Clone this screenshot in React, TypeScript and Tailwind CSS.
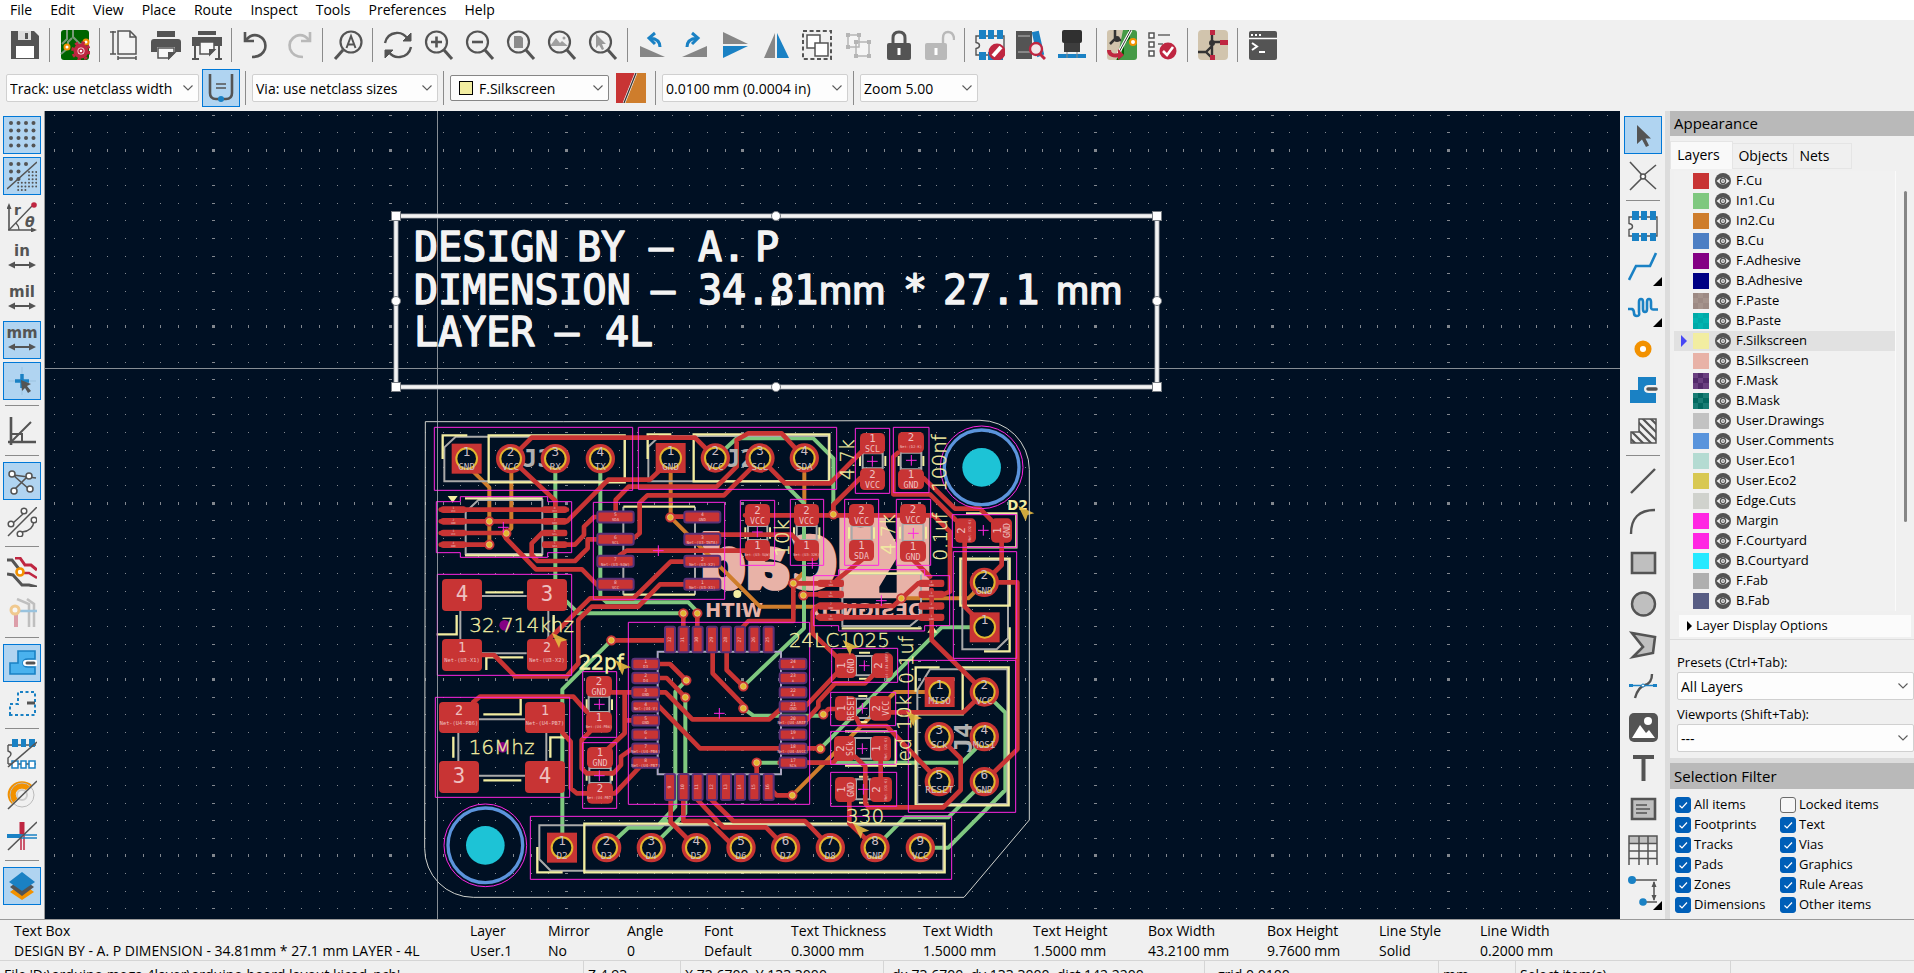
import React, { useState } from "react";

const UI = "font-['Open_Sans','Noto_Sans',sans-serif]";
const G = "#545454";
const B = "#1a81c4";
const R = "#bf2641";
const O = "#f29100";

/* ---------- shared controls ---------- */

function Svg({ children }: { children: React.ReactNode }) {
  return (
    <svg viewBox="0 0 30 30" className="size-[30px]" fill="none" stroke={G} strokeWidth="2" aria-hidden="true">
      {children}
    </svg>
  );
}

function ToolButton({ label, active, more, children }: { label: string; active?: boolean; more?: boolean; children: React.ReactNode }) {
  return (
    <button
      type="button"
      aria-label={label}
      className={
        active
          ? "relative flex size-[38px] shrink-0 items-center justify-center border border-[#0078d7] bg-[#b0d4f1]"
          : "relative flex size-[38px] shrink-0 items-center justify-center"
      }
    >
      <Svg>{children}</Svg>
      {more && (
        <svg viewBox="0 0 9 9" className="absolute right-0 bottom-0 size-[9px]" aria-hidden="true">
          <path d="M9 0V9H0Z" fill="#000" />
        </svg>
      )}
    </button>
  );
}

const VSep = () => <div className="mr-[3px] ml-[2px] h-[34px] w-px shrink-0 bg-[#8b8b8b]" />;
const HSep = () => <div className="mt-[2px] mb-[3px] h-px w-[34px] shrink-0 bg-[#8b8b8b]" />;

function Combo({ label, value, width, swatch, edge }: { label: string; value: string; width: string; swatch?: boolean; edge?: boolean }) {
  return (
    <div className={`relative flex shrink-0 items-center rounded-[2px] border bg-[#fdfdfd] ${edge ? "h-[26px] border-[#868686]" : "h-7 border-[#d0d0d0]"} ${width}`}>
      {swatch && <span className="ml-2 size-[14px] shrink-0 border border-black bg-[#f2eda1]" />}
      <select aria-label={label} className={`h-full w-full appearance-none bg-transparent pr-6 text-[14px] text-black outline-none ${swatch ? "pl-[6px]" : "pl-[3px]"}`}>
        <option>{value}</option>
      </select>
      <svg viewBox="0 0 10 6" className="pointer-events-none absolute right-[5px] h-[6px] w-[10px]" fill="none" stroke="#5b5b5b" strokeWidth="1.1" aria-hidden="true">
        <path d="M.5.5 5 5 9.5.5" />
      </svg>
    </div>
  );
}

/* ---------- icons ---------- */

const lens = <path d="M20 20 28 29" strokeWidth="3" />;
const ring = <circle cx="12.5" cy="12" r="10.5" strokeWidth="2.2" />;
const chip = (
  <>
    <path d="M1 6H29V25H1V18.500Q4.500 18 4.500 15.500T1 12.500Z" strokeWidth="1.400" />
    <path d="M4 0h7v9H4zM13 0h6v9h-6zM22 0h6v9h-6zM4 22h7v8H4zM13 22h6v8h-6zM22 22h6v8h-6z" fill={B} stroke="none" />
  </>
);

const ico = {
  save: (
    <>
      <path d="M1 1H24L29 6V29H1Z" fill={G} stroke="none" />
      <path d="M8 1H21V10H8Z" fill="#dedede" stroke="none" />
      <path d="M15 3h3v6h-3z" fill={G} stroke="none" />
      <path d="M6 16H24V28H6Z" fill="#fff" stroke="none" />
    </>
  ),
  board: (
    <>
      <rect x="1" y="0" width="28" height="30" rx="3" fill="#006400" stroke="none" />
      <path d="M7 0V9L2 14M13 0V7L20 14H29M1 24 8 18V12L12 8" stroke="#7a9a7a" strokeWidth="2" />
      <circle cx="7" cy="17" r="2.500" fill="#fff" stroke={O} />
      <circle cx="26" cy="12" r="2.500" fill="#fff" stroke={O} />
      <circle cx="21" cy="21" r="5.500" fill="#fff" stroke={R} strokeWidth="4" />
      <circle cx="21" cy="21" r="8.500" stroke={R} strokeWidth="2.500" strokeDasharray="3.400 3.300" />
      <circle cx="21" cy="21" r="2" stroke={R} strokeWidth="1.500" />
    </>
  ),
  page: (
    <>
      <path d="M8 1H20L26 7V24H8Z" fill="#f3f3f3" strokeWidth="1.500" />
      <path d="M20 1V7H26" strokeWidth="1.500" />
      <path d="M3 1V24M0 2H6M0 24H6M8 28H26M8 26V30M26 26V30" strokeWidth="1.500" />
    </>
  ),
  print: (
    <>
      <path d="M6 1H24V7H6Z" fill={G} stroke="none" />
      <path d="M3 9H27Q30 9 30 12V22H24V17H6V22H0V12Q0 9 3 9Z" fill={G} stroke="none" />
      <path d="M7 18H23V23L18 28H7Z" fill="#f7f7f7" strokeWidth="1.500" />
      <path d="M23 23H18V28Z" fill={G} />
    </>
  ),
  plot: (
    <>
      <path d="M6 1H24V5H6ZM0 7H30V16H0Z" fill={G} stroke="none" />
      <path d="M8 12H22V20L18 24H8Z" fill="#f7f7f7" strokeWidth="1.500" />
      <path d="M3 16V28M27 16V28M0 29H7M23 29H30" />
      <path d="M22 20H18V24Z" fill={G} />
    </>
  ),
  undo: <path d="M3 2V11H12M4 10Q10 3 17 6Q25 10 23 19Q20 27 10 27" strokeWidth="2.600" />,
  redo: <path d="M27 2V11H18M26 10Q20 3 13 6Q5 10 7 19Q10 27 20 27" strokeWidth="2.600" stroke="#b9b9b9" />,
  find: (
    <>
      <circle cx="18" cy="12" r="10.500" strokeWidth="2.200" />
      <path d="M10 20 2 29" strokeWidth="3" />
      <path d="M13.500 18 18 6 22.500 18M15 14.500H21" />
    </>
  ),
  refresh: (
    <>
      <path d="M2 13Q4 4 13 3Q20 2 25 9M28 17Q26 26 17 27Q10 28 5 21" strokeWidth="2.400" />
      <path d="M28 3V11H20ZM2 28V20H10Z" fill={G} strokeWidth="1" />
    </>
  ),
  zin: <>{ring}{lens}<path d="M7 12H18M12.500 6.500V17.500" strokeWidth="2.600" /></>,
  zout: <>{ring}{lens}<path d="M7 12H18" strokeWidth="2.600" /></>,
  zpage: <><path d="M8 6H15L17 8V18H8Z" fill="#8b8b8b" stroke="none" />{ring}{lens}</>,
  zobj: <><path d="M3 16 9 8 13 13 15 11 21 16Z" fill="#a0a0a0" stroke="none" /><circle cx="17" cy="8" r="1.500" fill="#a0a0a0" stroke="none" />{ring}{lens}</>,
  zsel: <><path d="M8 4V18L11 15 14 20 16 19 14 14H18Z" fill="#9a9a9a" stroke="none" />{ring}{lens}</>,
  ccw: <><path d="M2 16V27H27Z" fill="#868686" stroke="none" /><path d="M22 17Q22 9 12 8M17 3 11 8 17 14" stroke={B} strokeWidth="3" /></>,
  cw: <><path d="M28 16V27H3Z" fill="#868686" stroke="none" /><path d="M8 17Q8 9 18 8M13 3 19 8 13 14" stroke={B} strokeWidth="3" /></>,
  flipv: <><path d="M3 2V14H28Z" fill="#868686" stroke="none" /><path d="M3 16V28L28 16Z" fill={B} stroke="none" /></>,
  fliph: <><path d="M14 3V28H3Z" fill="#868686" stroke="none" /><path d="M16 3V28H28Z" fill={B} stroke="none" /></>,
  group: <><path d="M1 1H29V29H1Z" strokeDasharray="4 2.600" /><path d="M5 5H18V18H5Z" fill="#fff" strokeWidth="1.500" /><path d="M13 13H26V26H13Z" fill="#fff" strokeWidth="1.500" /></>,
  ungroup: <g stroke="#b5b5b5"><path d="M5 5H16V17H5ZM13 12H26V26H13Z" fill="#f5f5f5" strokeWidth="1.500" /><path d="M4 4h2v2H4zM15 4h2v2h-2zM4 16h2v2H4zM12 11h2v2h-2zM25 11h2v2h-2zM12 25h2v2h-2zM25 25h2v2h-2z" /></g>,
  lock: <><rect x="3" y="13" width="24" height="17" rx="2" fill={G} stroke="none" /><path d="M9 14V8Q9 2 15 2T21 8V14" strokeWidth="3" /><path d="M15 18V25" stroke="#fff" strokeWidth="3" /></>,
  unlock: <g stroke="#b9b9b9"><rect x="0" y="13" width="22" height="17" rx="2" fill="#b9b9b9" stroke="none" /><path d="M18 14V8Q18 2 23 2T29 8V10" strokeWidth="2.400" /><path d="M11 18V25" stroke="#fff" strokeWidth="3" /></g>,
  fpedit: <>{chip}<circle cx="22" cy="22" r="8.500" fill={R} stroke="none" /><path d="M18 26 26 17" stroke="#fff" strokeWidth="4" /></>,
  lib: <><path d="M1 2H7V28H1ZM9 2H15V28H9Z" fill={G} /><path d="M2 6H14M2 22H14" stroke="#bbb" strokeWidth="1" /><path d="M17 3 22 2 27 24 22 26Z" fill={B} stroke={B} /><circle cx="20" cy="19" r="6" fill="#f0e8ea" stroke={R} strokeWidth="2.400" /><path d="M24 24 29 29" stroke={R} strokeWidth="3" /></>,
  d3: <><rect x="5" y="0" width="20" height="13" rx="2" fill="#303030" stroke="none" /><path d="M7 13H23V22H7Z" fill="#3d3d3d" stroke="none" /><path d="M1 24H29V28H1Z" fill={B} stroke="none" /><path d="M10 22V28M20 22V28" stroke="#888" strokeWidth="1" /></>,
  upd: <><rect x="0" width="18" height="30" rx="3" fill="#d1c4ad" stroke="none" /><path d="M16 0H27Q30 0 30 3V27Q30 30 27 30H10Z" fill="#459a46" stroke="none" /><path d="M22 0V8L16 14V24L10 30" stroke="#006400" /><path d="M8 0V9L3 14M8 10H14" stroke="#333" strokeWidth="2.500" /><circle cx="10" cy="9" r="3" fill="#333" stroke="none" /><circle cx="26" cy="12" r="3" fill="#fff" stroke={O} /><path d="M24 0 11 24" stroke="#fff" strokeWidth="3" /><path d="M24 0 11 24" stroke="#333" strokeWidth="1" /><path d="M2 20Q2 27 13 25" stroke={R} strokeWidth="4" /><path d="M11 19 17 25 11 30Z" fill={R} stroke="none" /></>,
  drc: <><path d="M1 3H6V8H1ZM1 12H6V17H1ZM1 21H6V26H1Z" fill="#fff" strokeWidth="1.500" /><path d="M10 5H22M10 14H15" stroke="#888" /><circle cx="20" cy="21" r="8.500" fill={R} stroke="none" /><path d="M15 21 19 25 25 17" stroke="#fff" strokeWidth="2.600" /></>,
  sch: <><rect width="30" height="30" rx="4" fill="#d1c4ad" stroke="none" /><path d="M14 0V30M14 12H26M0 22H8L14 16M8 22 14 28" stroke="#333" strokeWidth="2.400" /><circle cx="14" cy="13" r="3" fill="#333" stroke="none" /><path d="M12 0h5v5h-5zM22 10h8v5h-8zM12 25h5v5h-5z" fill={R} stroke="none" /></>,
  term: <><rect x="1" y="1" width="28" height="29" rx="2" fill={G} stroke="none" /><path d="M1 8.500H29" stroke="#fff" strokeWidth="1.500" /><path d="M3 5H5M7 5H9M11 5H13" stroke="#fff" /><path d="M4 13 9 16.500 4 20M11 22H17" stroke="#fff" /></>,
};

const dots = (x0: number, y0: number, n: number, m: number, s: number, r: number) =>
  Array.from({ length: n * m }, (_, i) => <circle key={i} cx={x0 + (i % n) * s} cy={y0 + Math.floor(i / n) * s} r={r} fill={G} stroke="none" />);

function Dim({ text }: { text: string }) {
  return (
    <>
      <text x="15" y="13" textAnchor="middle" fill={G} stroke="none" fontFamily="DejaVu Sans" fontSize="15" fontWeight="600">{text}</text>
      <path d="M5 22H25" />
      <path d="M1 22 8 18.500V25.500ZM29 22 22 18.500V25.500Z" fill={G} stroke="none" />
    </>
  );
}

const left = {
  grid: <>{dots(4, 3, 4, 4, 7.5, 2)}</>,
  gridov: <>{dots(4, 3, 2, 3, 7.5, 2)}{dots(19, 3, 1, 1, 7, 2)}{dots(22, 11, 3, 5, 3.6, 1)}{dots(11.2, 21.8, 3, 3, 3.6, 1)}<path d="M0 28 30 1" strokeWidth="1.500" /></>,
  polar: <><path d="M2 28V4M1 28H28" strokeWidth="1.600" /><path d="M2 1 4.500 7H-.5ZM30 28 24 25.500V30.500Z" fill={G} stroke="none" /><path d="M2 28 25 4M9 21Q12 24 12 28" strokeWidth="1.300" /><circle cx="27" cy="3" r="2.800" fill={R} stroke="none" /><text x="7" y="13" fontSize="14" fill={G} stroke="none" fontFamily="DejaVu Sans" fontWeight="600">r</text><text x="18" y="25" fontSize="14" fill={G} stroke="none" fontFamily="DejaVu Sans" fontStyle="italic" fontWeight="600">θ</text></>,
  cursor: <><path d="M15 1V29M1 15H29" stroke="#9cc3e0" strokeWidth="1" /><path d="M15 8V22M8 15H22" stroke={B} strokeWidth="3.500" /><path d="M14 14 24 18 20 20 24 25 21 27 18 22 15 25Z" fill={G} stroke="none" /></>,
  angle: <><path d="M4 1V29M1 26H29" strokeWidth="2.600" /><path d="M4 26 24 6M4 18H15V26" strokeWidth="2" /></>,
  rats: <><path d="M6 9 29 12M6 25 21 10M6 9 23 24" strokeWidth="1.600" /><circle cx="5" cy="8" r="3" fill="#fff" strokeWidth="1.500" /><circle cx="22" cy="10" r="3" fill="#fff" strokeWidth="1.500" /><circle cx="7" cy="25" r="3" fill="#fff" strokeWidth="1.500" /><circle cx="23" cy="23" r="3" fill="#fff" strokeWidth="1.500" /></>,
  ratcurve: <><path d="M1 29 30 0M6 16 16 7M15 25Q26 24 27 14" strokeWidth="1.500" /><circle cx="4" cy="17" r="2.800" fill="#fff" strokeWidth="1.500" /><circle cx="17" cy="4" r="2.800" fill="#fff" strokeWidth="1.500" /><circle cx="13" cy="27" r="2.800" fill="#fff" strokeWidth="1.500" /><circle cx="27" cy="13" r="2.800" fill="#fff" strokeWidth="1.500" /></>,
  contrast: <><path d="M8 1H13L18 8H24L30 13" stroke={R} strokeWidth="3" /><path d="M17 16H22L30 21" stroke={R} strokeWidth="2.600" /><path d="M0 3H5L12 12M0 17 6 18 15 28H22L30 30" strokeWidth="3" /><circle cx="13" cy="15" r="3.500" fill="#fff" stroke={O} strokeWidth="2.600" /></>,
  netcol: <g opacity=".4"><path d="M10 1 22 6V29M20 1 27 6V29" stroke="#777" strokeWidth="2.500" /><path d="M9 13H30" stroke={B} strokeWidth="2.500" /><path d="M9 15V29" stroke={R} strokeWidth="4" /><circle cx="8" cy="12" r="4" fill="#fff" stroke={O} strokeWidth="3" /></g>,
  zonefill: <><path d="M3 26V15H11V3H28V11H21Q16 11 16 15T21 19H28V26Z" fill="#4ab2ee" stroke={B} strokeWidth="1.600" /><path d="M19 15H28" stroke="#fff" strokeWidth="6" strokeLinecap="round" /><path d="M20 15H27" strokeWidth="3" strokeLinecap="round" /></>,
  zoneout: <><path d="M3 26V15H11V3H28V26Z" stroke={B} strokeDasharray="3 2.500" /><path d="M20 14H28" strokeWidth="3" /></>,
  padsk: <><path d="M1 6H29M1 25H29M1 6V12Q4 13 4 15T1 19V25" strokeWidth="1.400" /><path d="M5 0h6v8H5zM14 0h5v8h-5zM22 0h6v8h-6z" fill={B} stroke="none" /><path d="M5 22h6v7H5zM14 22h5v7h-5zM22 22h6v7h-6z" fill="#fff" stroke={B} strokeWidth="1.500" /><path d="M1 28 30 3" strokeWidth="1.600" /></>,
  viask: <><path d="M25 5A13 12 0 1 0 5 24L11 18A6 5 0 1 1 19 10Z" fill={O} stroke="none" /><circle cx="15" cy="15" r="12" stroke="#bbb" strokeWidth="1" /><circle cx="15" cy="15" r="5" fill="#f0f0f0" stroke="#ccc" /><path d="M1 29 30 1" strokeWidth="1.600" /></>,
  tracksk: <><path d="M15 1V14" stroke={R} strokeWidth="5" /><path d="M14 14V29M17 14V29" stroke={R} strokeWidth="1.500" /><path d="M0 15H14" stroke={B} strokeWidth="4" /><path d="M14 14H30M14 17H30" stroke={B} strokeWidth="1.300" /><path d="M1 29 30 1" strokeWidth="1.600" /></>,
  layers: <><path d="M15 12 27 21 15 29 3 21Z" fill={O} stroke="none" /><path d="M15 7 27 16 15 25 3 16Z" fill={G} stroke="none" /><path d="M15 1 28 11 15 20 2 11Z" fill={B} stroke="none" /></>,
};

const right = {
  arrow: <path d="M9 5V24L14 19.500 18 27 21 25.500 17.500 18.500H23Z" fill={G} stroke="none" />,
  local: <><path d="M2 1 14 14M28 4 16 14M2 29 14 17M28 28 16 17" strokeWidth="1.600" /><circle cx="15" cy="15.500" r="2.500" fill="#fff" strokeWidth="1.500" /></>,
  chip,
  route: <path d="M1 28 8 14H22L28 1" stroke={B} strokeWidth="2.600" />,
  tune: <path d="M0 16H4Q6 17 6 20T9 23T11 19V9Q11 6 13 6T15 9V16Q15 19 17 19T19 16V9Q19 6 21 6T23 9V14Q23 17 26 16.500H30" stroke={B} strokeWidth="2.600" />,
  via: <circle cx="15" cy="15" r="5.800" stroke={O} strokeWidth="5.500" fill="#fff" />,
  zone: <><path d="M2 28V15H10V2H28V10H21Q16 10 16 14T21 18H28V28Z" fill={B} stroke="none" /><path d="M20 14H28" strokeWidth="3.500" strokeLinecap="round" /></>,
  rule: <><clipPath id="ruleClip"><path d="M3 27V16H11V3H28V27Z" /></clipPath><g clipPath="url(#ruleClip)"><path d="M-4 8 20 32M1 5 26 30M6 2 32 28M10-2 36 24M14-6 40 20M-8 12 16 36" strokeWidth="2.200" /></g><path d="M3 27V16H11V3H28V27Z" strokeWidth="1.500" /></>,
  line: <path d="M3 27 27 3" strokeWidth="2.400" />,
  arc: <path d="M3 27Q3 15 9 9T27 3" strokeWidth="2.400" />,
  rect: <path d="M4 5H27V25H4Z" fill="#bfbfbf" strokeWidth="2.600" />,
  circle: <circle cx="15.500" cy="15" r="11.500" fill="#bfbfbf" strokeWidth="2.400" />,
  poly: <path d="M4 3 27 7 25 23 5 27 15 17Z" fill="#bfbfbf" strokeWidth="2.600" />,
  bezier: <><path d="M24 3Q24 12 17 14T7 27" strokeWidth="2.400" /><path d="M3 14.500H27" stroke={B} strokeWidth="1.500" /><path d="M1 13h4v3H1zM25 13h4v3h-4z" fill={B} stroke="none" /><circle cx="15" cy="14.500" r="1.500" fill="#fff" stroke={B} strokeWidth="1" /></>,
  image: <><rect x="1" y="1" width="29" height="29" rx="5" fill={G} stroke="none" /><circle cx="20" cy="9" r="4" fill="#fff" stroke="none" /><path d="M4 26 12 13 18 21 21 18 27 26Z" fill="#fff" stroke="none" /></>,
  text: <path d="M5 4H26M15.500 4V28" strokeWidth="4" />,
  textbox: <><path d="M4 5H27V25H4Z" fill="#bfbfbf" strokeWidth="2.600" /><path d="M8 11H19M8 15H22M8 19H19" strokeWidth="1.500" /></>,
  table: <><path d="M1 1H29V8H1Z" fill="#bfbfbf" stroke="none" /><path d="M1 30V1H29V30M1 8.500H29M1 16H29M1 23.500H29M11 1V30M20 1V30" strokeWidth="1.500" /></>,
  dim: <><path d="M6 4H29M16 26H29M26 6V24" strokeWidth="1.500" /><circle cx="4" cy="4" r="4" fill={B} stroke="none" /><circle cx="15" cy="26" r="3.800" fill={B} stroke="none" /><path d="M26 5 28.500 11H23.500ZM26 25 28.500 19H23.500Z" fill={G} stroke="none" /></>,
};

/* ---------- board drawing ---------- */

function gridPath() {
  let d = "";
  for (let i = -3; i < 92; i++) {
    const x = Math.round(389.8 - 353 + i * 17.64);
    const mx = ((i % 10) + 10) % 10 === 0;
    for (let j = 0; j < 48; j++) {
      const y = Math.round(149.9 - 35.3 + j * 17.64);
      const my = j % 10 === 2;
      if (mx && my) d += `M${x - 1} ${y - 1}h3v3h-3z`;
      else if (mx) d += `M${x - 1} ${y}h3v1h-3z`;
      else if (my) d += `M${x} ${y - 1}h1v3h-1z`;
      else d += `M${x} ${y}h1v1h-1z`;
    }
  }
  return d;
}

const CU = "#c83434";
const SILK = "#f2eda1";

type PinSpec = [number, number, string, string, boolean?];
const pins: PinSpec[] = [
  [140, 146, "1", "GND", true], [272, 146, "2", "VCC"], [406, 146, "3", "RX"], [541, 146, "4", "TX"],
  [752, 144, "1", "GND", true], [886, 144, "2", "VCC"], [1020, 144, "3", "SCL"], [1153, 144, "4", "SDA"],
  [1693, 517, "2", "GND"], [1694, 652, "1", "", true],
  [1559, 846, "1", "MISO", true], [1693, 846, "2", "VCC"], [1558, 980, "3", "SCk"], [1693, 980, "4", "MOSI"], [1558, 1115, "5", "RESET"], [1693, 1115, "6", "GND"],
  [426, 1313, "1", "D2", true], [560, 1313, "2", "D3"], [694, 1313, "3", "D4"], [829, 1313, "4", "D5"], [963, 1313, "5", "D6"],
  [1097, 1313, "6", "D7"], [1231, 1313, "7", "D8"], [1365, 1313, "8", "GND"], [1501, 1313, "9", "VCC"],
];

type PadSpec = [number, number, number, number, string, string];
const pads: PadSpec[] = [
  [1320, 69, 75, 62, "1", "SCL"], [1320, 175, 75, 65, "2", "VCC"],
  [1434, 66, 78, 62, "2", "Net-(D2-K)"], [1434, 178, 78, 60, "1", "GND"],
  [975, 282, 75, 66, "2", "VCC"], [975, 390, 75, 63, "1", "Net-(U3-SQW)"],
  [1122, 282, 75, 66, "2", "VCC"], [1122, 390, 75, 63, "1", "Net-(U3-32K)"],
  [1287, 282, 75, 66, "2", "VCC"], [1287, 390, 75, 63, "1", "SDA"],
  [1440, 282, 78, 60, "2", "VCC"], [1440, 393, 78, 62, "1", "GND"],
  [498, 798, 78, 62, "2", "GND"], [498, 906, 78, 62, "1", "Net-(U4-PB6)"],
  [501, 1011, 78, 63, "1", "GND"], [501, 1119, 78, 62, "2", "Net-(U4-PB7)"],
];
const hpads: PadSpec[] = [
  [1605, 325, 63, 73, "2", "Net-(D2-K)"], [1713, 325, 63, 73, "1", "GND"],
  [1245, 730, 63, 74, "1", "GND"], [1356, 730, 63, 74, "2", "Net-(U4-AREF)"],
  [1245, 858, 63, 74, "1", "RESET"], [1350, 858, 63, 74, "2", "VCC"],
  [1242, 978, 63, 75, "2", "SCk"], [1353, 978, 60, 75, "1", "Net-(D1-K)"],
  [1245, 1101, 63, 75, "1", "GND"], [1350, 1101, 66, 75, "2", "Net-(D1-K)"],
];
const xtal: PadSpec[] = [
  [66, 507, 120, 96, "4", ""], [321, 507, 120, 96, "3", ""], [66, 687, 120, 96, "1", "Net-(U3-X1)"], [321, 687, 120, 96, "2", "Net-(U3-X2)"],
  [57, 876, 120, 93, "2", "Net-(U4-PB6)"], [315, 876, 120, 93, "1", "Net-(U4-PB7)"], [57, 1053, 120, 96, "3", ""], [315, 1053, 120, 96, "4", ""],
];

const vias = [
  [208, 334], [208, 404], [259, 370], [751, 322], [790, 610], [832, 610], [574, 691], [799, 811], [796, 862],
  [1240, 313], [1120, 520], [1150, 556], [1444, 565], [970, 829], [970, 895], [1210, 913], [1201, 1016], [1010, 1058], [1117, 1156],
];

const crosses = [[250, 352], [715, 422], [1357, 154], [1474, 151], [1012, 366], [1177, 460], [1480, 370], [1384, 572], [1690, 361], [898, 910], [538, 883], [538, 1097], [1333, 767], [1327, 895], [1327, 1016], [1330, 1138]];

const cursors = [[395, 668], [585, 750], [1268, 690], [1795, 288], [1458, 903], [1300, 1240]];

function PadText({ x, y, n, net }: { x: number; y: number; n: string; net: string }) {
  const small = net.length > 5;
  return (
    <>
      <text x={x} y={y - 3} fontSize="32">{n}</text>
      <text x={x} y={y + (small ? 18 : 26)} fontSize={small ? "11" : "25"}>{net}</text>
    </>
  );
}

function SoicRow({ x, w, h, ys, names }: { x: number; w: number; h: number; ys: number[]; names: string[] }) {
  return (
    <>
      {ys.map((y, i) => (
        <g key={y}>
          <rect x={x} y={y - h / 2} width={w} height={h} rx="7" fill={CU} stroke="#5a3076" strokeWidth={h > 25 ? 6 : 0} />
          <text x={x + w / 2} y={y - 2} fontSize={h > 25 ? 14 : 9}>{names[i].split(" ")[0]}</text>
          <text x={x + w / 2} y={y + h / 2 - 3} fontSize={h > 25 ? 12 : 8}>{names[i].split(" ")[1]}</text>
        </g>
      ))}
    </>
  );
}

const qfpX = [750, 791, 833, 876, 918, 960, 1003, 1046];
const qfpY = [762, 804, 847, 889, 931, 974, 1016, 1058];

function Board() {
  return (
    <g transform="translate(420 410) scale(.33333)" fill="none">
      {/* back silkscreen logo, seen through the board */}
      <g transform="translate(1528 0) scale(-1 1)" fill="#e8b2a7">
        <path d="M0 320H168Q176 352 206 352T244 320H270V565H0Z" />
        <path d="M52 320H98V400L130 345V320H66ZM98 445 150 530V548H98Z" fill="#001023" />
        <circle cx="206" cy="316" r="26" />
        <g fontFamily="Open Sans" fontWeight="800" fontSize="222" stroke="#e8b2a7" strokeWidth="8" strokeLinejoin="round">
          <text x="272" y="538">C</text>
          <text x="416" y="538">a</text>
          <text x="548" y="538">d</text>
        </g>
        <g fontFamily="DejaVu Sans" fontWeight="700" fontSize="58">
          <text x="16" y="620">DESIGNED</text>
          <text x="499" y="620">WITH</text>
        </g>
      </g>

      {/* internal copper */}
      <g strokeWidth="12" strokeLinecap="round" strokeLinejoin="round">
        <path stroke="#ce7d2c" d="M160 185 208 232V404M274 146V355L258 370M752 146V322L1020 590H1190M1153 190V280M1120 520 1148 490M1444 565H1645L1693 517M1559 846H1425L1117 1156" />
        <path stroke="#7fc87f" d="M406 146V520M440 575 475 610H790M541 146V560L560 577H805L832 605M886 144 950 85H1180L1240 145V313M1100 228 1152 280V655L970 829M574 691 427 838V1313M799 811 766 845V1190L720 1240M796 862V1210L694 1313M740 1233 720 1253H625L560 1313M970 895 1000 917H1210M1010 1058H1625L1693 990M1201 1016 1565 652H1660M1693 846 1756 908V1140L1585 1313H1501M1693 1115 1585 1222H1455L1365 1313" />
      </g>

      {/* fabrication outlines */}
      <g stroke="#a9a9a9" strokeWidth="6">
        <path d="M107 80H615V214H73V112ZM719 78H1226V214H685V110ZM175 270H367V432H137V306ZM610 290V554M825 290V554M186 558H320M121 603V687M385 603V687M186 730H320" />
        <path d="M177 928H315M115 969V1053M379 969V1053M177 1097H315M713 725H1083V1093H713ZM358 1246H1570V1382H392L358 1348ZM1530 778H1762V1182H1492V840ZM1627 450H1764V685L1730 718H1627ZM1267 492H1503V620L1470 648H1267Z" />
        <path d="M1328 130H1388V175H1328ZM1442 128H1504V178H1442ZM984 348H1042V390H984ZM1130 348H1190V390H1130ZM1295 348H1355V390H1295ZM1448 342H1510V393H1448ZM506 860H568V906H506ZM508 1074H572V1119H508ZM1308 738H1356V796H1308ZM1308 866H1350V924H1308ZM1305 984H1353V1046H1305ZM1308 1108H1350V1168H1308Z" />
      </g>

      {/* front silkscreen */}
      <g stroke={SILK} strokeWidth="7">
        <path d="M206 76H614V217H206ZM68 147V76H142M821 73H1228V214H821ZM683 147V73H754M135 265H368M135 436H368M610 290H825M610 554H825M196 547H310M50 673H110V615M401 615V680M199 780V742H310" />
        <path d="M190 913H302V860M100 980V1043M391 1043V982H450M190 1111H304M493 1241H1574V1387H493ZM352 1311V1387H428M1628 772H1766V1186H1487V913H1628ZM1487 845V772H1559M1621 446H1769V587H1621ZM1692 724H1769V652M1265 490H1505M1265 655H1505M1638 310H1789V412H1638M1275 964H1427V1067H1275" />
        <path strokeWidth="6" d="M1320 138V168M1396 138V168M1436 138V168M1510 138V168M976 352V386M1050 352V386M1122 352V386M1198 352V386M1287 352V386M1362 352V386M1440 350V386M1518 350V386M500 868V900M576 868V900M500 1082V1112M576 1082V1112M1317 728H1350M1317 806H1350M1315 858H1342M1315 936H1342M1317 1100H1345M1317 1178H1345" />
      </g>
      <path fill={SILK} d="M83 258H113L98 278ZM1522 668H1552L1537 645Z" />
      <g stroke="#aaa4d4" strokeWidth="3"><path d="M713 725H1083V1093H713Z" /></g>

      {/* front copper */}
      <g stroke={CU} strokeWidth="14" strokeLinecap="round" strokeLinejoin="round">
        <path d="M272 146 335 83H825L886 144M272 146 406 272V299M62 299H441M62 334H441L565 209H690L752 150M62 369H250L258 385 348 478H486L530 523M62 404H208M587 321V270L626 230H890L950 170V90L985 70H1085L1153 144" />
        <path d="M641 385 659 370V278L682 256H912L1020 148M441 404H465L492 375V350L522 321H560M366 369 335 400V435L353 453H465L503 415V388H560M751 320H800M600 435 620 422H1010M850 374H1115L1140 400M793 455H752L640 565H510L385 690M793 523H720L655 590H515L475 630V760L440 799H285L222 735H186" />
        <path d="M1020 144 1095 220H1230L1330 120M1320 205 1240 285V313M975 316H1540L1590 365V545L1570 553M1434 128 1420 140V253H1530L1607 330M1512 205 1605 296H1680L1713 330M1634 398V590L1694 650M1745 398V465L1693 517M1693 517H1792V1018L1693 1115M1325 450 1250 510M1480 450 1530 500" />
        <path d="M1120 520H1230M1150 553H1230M1120 520V633H985L960 660M1193 588H1420L1495 520M1193 588 1178 605V670L1255 745M1193 622H1500M1535 540V690L1693 846M574 691H732M790 610V660M832 610V660M878 720V790L970 885M920 720V780L970 829" />
        <path d="M717 762H750L799 811M717 804H740L796 862M717 847H737L817 928H1048L1095 885M717 889 840 1015H1201M576 847H640M614 847V970L560 1020M614 931H640M637 1016 603 1040V1065L580 1090H500L485 1075V990L510 965M660 1070 585 1150H470L452 1135V995L425 965M160 876 180 860H460L500 905" />
        <path d="M752 1170V1236L829 1313M790 1170V1233H865L945 1313M833 1170 910 1252H1038L1097 1313M875 1170 940 1233H1155L1231 1313M1010 1058V1095M1117 1156H1070L1045 1130M1160 885 1250 790M1160 930 1195 890V875L1245 820H1335L1360 795M1210 913 1225 897H1245M1079 1058H1240L1260 1030M1310 925 1320 948H1400L1558 1115M1413 907H1630L1693 846M1558 980 1622 1045V1140L1570 1192H1345L1336 1180V1070L1305 1040M1382 1053V1101M1288 1176V1240L1365 1313" />
      </g>

      {/* reference designators */}
      <g fill="#afafaf" fontFamily="'DejaVu Sans Mono', monospace" fontSize="76" fontWeight="700">
        <text x="306" y="172">J3</text>
        <text x="916" y="170">J2</text>
        <text transform="translate(1655 1030) rotate(-90)">J4</text>
      </g>

      {/* pads */}
      {pins.map(([x, y, n, net, sq]) => (
        <g key={`${x}-${y}`}>
          {sq ? <rect x={x - 45} y={y - 45} width="90" height="90" fill={CU} /> : <circle cx={x} cy={y} r="44" fill={CU} />}
          <circle cx={x} cy={y} r="31" fill="#001023" stroke="#e2b62e" strokeWidth="6" />
          <g fill="#cdbfc4" textAnchor="middle" fontFamily="'DejaVu Sans Mono', monospace">
            <text x={x} y={y - 9} fontSize="38">{n}</text>
            <text x={x} y={y + 35} fontSize="28">{net}</text>
          </g>
        </g>
      ))}
      <g fill="#eec0c0" textAnchor="middle" fontFamily="'DejaVu Sans Mono', monospace">
        {pads.map(([x, y, w, h, n, net]) => (
          <g key={`${x}-${y}`}>
            <rect x={x} y={y} width={w} height={h} rx="14" fill={CU} />
            <PadText x={x + w / 2} y={y + h / 2} n={n} net={net} />
          </g>
        ))}
        {hpads.map(([x, y, w, h, n, net]) => (
          <g key={`${x}-${y}`}>
            <rect x={x} y={y} width={w} height={h} rx="14" fill={CU} />
            <g transform={`translate(${x + w / 2} ${y + h / 2}) rotate(-90)`}>
              <PadText x={0} y={0} n={n} net={net} />
            </g>
          </g>
        ))}
        {xtal.map(([x, y, w, h, n, net]) => (
          <g key={`${x}-${y}`}>
            <rect x={x} y={y} width={w} height={h} rx="12" fill={CU} />
            <text x={x + w / 2} y={y + (net ? 38 : 66)} fontSize={net ? 40 : 62}>{n}</text>
            <text x={x + w / 2} y={y + 70} fontSize="16">{net}</text>
          </g>
        ))}
        <SoicRow x={62} w={76} h={20} ys={[299, 334, 369, 404]} names={["1 VCC", "2 GND", "3 VCC", "4 GND"]} />
        <SoicRow x={366} w={76} h={20} ys={[299, 334, 369, 404]} names={["8 VCC", "7 GND", "6 SCL", "5 SDA"]} />
        <SoicRow x={1193} w={79} h={22} ys={[520, 553, 588, 622]} names={["5 SDA", "6 SCL", "7 GND", "8 VCC"]} />
        <SoicRow x={1496} w={77} h={22} ys={[520, 553, 588, 622]} names={["4 GND", "3 VCC", "2 GND", "1 GND"]} />
        <SoicRow x={532} w={109} h={33} ys={[321, 388, 454, 523]} names={["5 SDA", "6 SCL", "7 Net-(U3-SQW)", "8 VCC"]} />
        <SoicRow x={793} w={108} h={33} ys={[321, 388, 454, 523]} names={["4 GND", "3 Net-(U3-INTA)", "2 Net-(U3-X2)", "1 Net-(U3-X1)"]} />
        <SoicRow x={637} w={80} h={31} ys={qfpY} names={["1 D3", "2 D4", "3 GND", "4 Net-(U4-V)", "5 GND", "6 x", "7 Net-(U4-PB6)", "8 Net-(U4-PB7)"]} />
        <SoicRow x={1079} w={80} h={31} ys={qfpY} names={["24 x", "23 x", "22 x", "21 GND", "20 Net-(U4-AREF)", "19 x", "18 Net-(U4-AVCC)", "17 SCk"]} />
        {qfpX.map((x, i) => (
          <g key={x}>
            <rect x={x - 15} y="650" width="30" height="77" rx="5" fill={CU} stroke="#5a3076" strokeWidth="6" />
            <rect x={x - 15} y="1092" width="30" height="78" rx="5" fill={CU} stroke="#5a3076" strokeWidth="6" />
            <text transform={`translate(${x + 2} 689) rotate(-90)`} fontSize="14">{32 - i}</text>
            <text transform={`translate(${x + 2} 1131) rotate(-90)`} fontSize="14">{9 + i}</text>
          </g>
        ))}
      </g>

      {vias.map(([x, y]) => (
        <g key={`${x}-${y}`}>
          <circle cx={x} cy={y} r="12" fill="#e2b62e" stroke={CU} strokeWidth="7" />
          <circle cx={x} cy={y} r="9" stroke="#f0dca0" strokeWidth="2" />
        </g>
      ))}

      {/* courtyards */}
      <g stroke="#ff26e2" strokeWidth="3">
        <path d="M43 52H638V241H43ZM655 52H1250V238H655ZM49 275H121V260H383V275H455V428H383V442H121V428H49ZM520 277H914V568H520ZM52 493H455V796H52ZM625 637H1169V1183H625ZM1306 55H1409V250H1306ZM1420 52H1527V248H1420ZM961 271H1064V466H961ZM1111 268H1211V466H1111ZM1274 268H1376V466H1274ZM1429 268H1532V466H1429Z" />
        <path d="M1181 497H1256V479H1514V497H1589V647H1514V663H1256V647H1181ZM1597 314H1790V412H1597ZM1600 425H1790V745H1600ZM1465 751H1787V1207H1465ZM1235 715H1433V817H1235ZM1232 847H1427V947H1232ZM1232 964H1430V1063H1232ZM1232 1087H1430V1189H1232ZM488 785H590V982H488ZM488 998H590V1195H488ZM46 862H449V1162H46ZM331 1219H1595V1408H331Z" />
        {crosses.map(([x, y]) => (
          <path key={`${x}-${y}`} d={`M${x - 16} ${y}h32M${x} ${y - 16}v32`} />
        ))}
      </g>

      {/* mounting holes */}
      {[[1685, 172], [196, 1306]].map(([x, y]) => (
        <g key={x}>
          <circle cx={x} cy={y} r="58" fill="#1dc3d6" />
          <circle cx={x} cy={y} r="112" stroke="#5b94dc" strokeWidth="10" />
          <circle cx={x} cy={y} r="124" stroke="#ff26e2" strokeWidth="3" />
        </g>
      ))}

      {/* values */}
      <circle cx="254" cy="646" r="16" fill="#840084" />
      <circle cx="248" cy="1012" r="16" fill="#840084" />
      <circle cx="952" cy="552" r="12" fill={SILK} />
      <g fill={SILK} stroke={SILK} strokeWidth="1" fontFamily="DejaVu Sans" fontWeight="200" fontSize="60">
        <text x="148" y="666">32.714khz</text>
        <text x="1106" y="712">24LC1025</text>
        <text x="146" y="1032">16Mhz</text>
        <text x="1278" y="1238">330</text>
        <text x="476" y="778" strokeWidth="4">22pf</text>
        <text x="1762" y="300" fontSize="40" fontWeight="700" strokeWidth="0">D2</text>
        <text transform="translate(1302 210) rotate(-90)" fontSize="56">4.7k</text>
        <text transform="translate(1577 246) rotate(-90)">100nf</text>
        <text transform="translate(1580 452) rotate(-90)" fontSize="56">0.1uf</text>
        <text transform="translate(1108 440) rotate(-90)">10k</text>
        <text transform="translate(1424 434) rotate(-90)" fontSize="56">4.7k</text>
        <text transform="translate(1480 822) rotate(-90)" fontSize="56">0.1uf</text>
        <text transform="translate(1474 960) rotate(-90)" fontSize="56">10k</text>
        <text transform="translate(1474 1070) rotate(-90)" fontSize="56">led</text>
      </g>
      {cursors.map(([x, y]) => (
        <path key={x} d="M0 0 48 22 28 27 22 46Z" transform={`translate(${x} ${y})`} fill="#e6b940" opacity=".9" />
      ))}

      <path stroke="#d0d2cd" strokeWidth="3" d="M16 35H430L1680 31A148 148 0 0 1 1828 178V1230L1632 1462H160A146 146 0 0 1 14 1315Z" />
    </g>
  );
}

const handles = [[396, 216], [1157, 216], [396, 387], [1157, 387], [776, 301]];
const knobs = [[776, 216], [776, 387], [396, 301], [1157, 301]];

function Canvas() {
  const words: [number, number, string][] = [
    [414, 261, "DESIGN"], [577, 261, "BY"], [649, 261, "–"], [698, 261, "A."], [755, 261, "P"],
    [414, 304, "DIMENSION"], [651, 304, "–"], [698, 304, "34.81"], [903, 304, "*"], [943, 304, "27.1"],
    [414, 346, "LAYER"], [555, 346, "–"], [605, 346, "4L"],
  ];
  return (
    <main className="min-w-0 flex-1 overflow-hidden border-l border-[#9a9a9a] bg-[#001023]">
      <svg className="block h-full w-full" role="img" aria-label="Board layout">
        <g transform="translate(-45 -111)">
          <path d={gridPath()} fill="#83888f" shapeRendering="crispEdges" />
          <Board />
          <path d="M437.500 111V919M45 368.500H2600" stroke="#b4b8bb" strokeWidth="1" opacity=".75" />
          <path d="M396 216H1157V387H396Z" fill="none" stroke="#8d9299" strokeWidth="5" />
          <path d="M396 216H1157V387H396Z" fill="none" stroke="#f3f3f3" strokeWidth="3.400" />
          <g fill="#f3f3f3" stroke="#f3f3f3" strokeWidth="1.500" strokeLinejoin="round" fontFamily="'DejaVu Sans Mono', monospace" fontSize="40">
            {words.map(([x, y, w]) => (
              <text key={`${x}-${y}`} x={x} y={y}>{w}</text>
            ))}
            <text x="819" y="304" fontFamily="Inter" fontSize="38">mm</text>
            <text x="1056" y="304" fontFamily="Inter" fontSize="38">mm</text>
          </g>
          <g fill="#fff" stroke="#777c82" strokeWidth="1">
            {handles.map(([x, y]) => (
              <rect key={`${x}-${y}`} x={x - 4.5} y={y - 4.5} width="9" height="9" />
            ))}
            {knobs.map(([x, y]) => (
              <circle key={`${x}-${y}`} cx={x} cy={y} r="4.500" />
            ))}
          </g>
        </g>
      </svg>
    </main>
  );
}

/* ---------- side panel ---------- */

const layers: [string, string, string?][] = [
  ["F.Cu", "#c83434"], ["In1.Cu", "#7fc87f"], ["In2.Cu", "#ce7d2c"], ["B.Cu", "#4d7fc4"], ["F.Adhesive", "#840084"], ["B.Adhesive", "#000084"],
  ["F.Paste", "#a5938c", "#9d8a84"], ["B.Paste", "#00b4b0", "#00aaa8"], ["F.Silkscreen", "#f2eda1"], ["B.Silkscreen", "#e8b2a7"],
  ["F.Mask", "#52296a", "#6a3f80"], ["B.Mask", "#02685f", "#197c74"], ["User.Drawings", "#c2c2c2"], ["User.Comments", "#5994dc"],
  ["User.Eco1", "#b4dbd2"], ["User.Eco2", "#d8c852"], ["Edge.Cuts", "#d0d2cd"], ["Margin", "#ff26e2"], ["F.Courtyard", "#ff26e2"],
  ["B.Courtyard", "#26e9ff"], ["F.Fab", "#afafaf"], ["B.Fab", "#585d84"],
];

function Eye() {
  return (
    <svg viewBox="0 0 16 16" className="size-4" aria-hidden="true">
      <circle cx="8" cy="8" r="8" fill="#545454" />
      <path d="M1.500 8Q8 1 14.500 8Q8 15 1.500 8Z" fill="#f0f0f0" />
      <circle cx="8" cy="8" r="2.600" fill="none" stroke="#545454" strokeWidth="1.300" />
      <circle cx="8" cy="8" r=".8" fill="#545454" />
    </svg>
  );
}

const filters: [string, boolean][] = [
  ["All items", true], ["Locked items", false], ["Footprints", true], ["Text", true], ["Tracks", true], ["Vias", true],
  ["Pads", true], ["Graphics", true], ["Zones", true], ["Rule Areas", true], ["Dimensions", true], ["Other items", true],
];

function FilterBox({ name, initial }: { name: string; initial: boolean }) {
  const [on, setOn] = useState(initial);
  return (
    <label className="relative flex h-5 items-center gap-[3px]">
      <input
        type="checkbox"
        checked={on}
        onChange={() => setOn(!on)}
        className="size-4 appearance-none rounded-[3px] border border-[#6b6b6b] bg-[#f6f6f6] checked:border-[#005fb8] checked:bg-[#005fb8]"
      />
      {on && (
        <svg viewBox="0 0 16 16" className="pointer-events-none absolute left-0 size-4" fill="none" stroke="#fff" strokeWidth="1.200" aria-hidden="true">
          <path d="M4.500 8.500 7 11 12 5.500" />
        </svg>
      )}
      {name}
    </label>
  );
}

function SidePanel() {
  return (
    <aside className="flex w-[249px] shrink-0 flex-col border-l-5 border-[#dcdcdc] text-[13px]">
      <h2 className="flex h-[25px] shrink-0 items-center bg-[#b9b9b9] pb-[2px] pl-1 text-[15px] leading-5">Appearance</h2>
      <div role="tablist" className="mt-[5px] flex h-7 shrink-0 items-end text-[14px] leading-5">
        <button role="tab" aria-selected="true" type="button" className="h-7 w-[63px] border border-b-0 border-[#e5e5e5] bg-[#f9f9f9] pr-[6px] pb-[2px]">Layers</button>
        <button role="tab" aria-selected="false" type="button" className="h-[26px] w-[61px] border border-l-0 border-[#e5e5e5]">Objects</button>
        <button role="tab" aria-selected="false" type="button" className="h-[26px] w-[58px] border border-l-0 border-[#e5e5e5] pr-4">Nets</button>
      </div>
      <div className="mt-[2px] flex shrink-0 pl-1">
        <ul className="flex-1 border-r border-[#fafafa] bg-[#f1f1f1]">
          {layers.map(([name, color, alt]) => (
            <li key={name} className={name === "F.Silkscreen" ? "flex h-5 items-center bg-[#e1e1e1]" : "flex h-5 items-center"}>
              <span className="flex w-[19px] justify-center">
                {name === "F.Silkscreen" && (
                  <svg viewBox="0 0 6 12" className="h-3 w-[6px]" aria-hidden="true"><path d="M0 0 6 6 0 12Z" fill="#4747f5" /></svg>
                )}
              </span>
              <svg viewBox="0 0 16 16" className="size-4" aria-hidden="true">
                <rect width="16" height="16" fill={color} />
                {alt && <path d="M0 0H5V5H0ZM10 0H16V5H10ZM5 5H10V10H5ZM0 10H5V16H0ZM10 10H16V16H10Z" fill={alt} />}
              </svg>
              <button type="button" aria-label={`Show ${name}`} className="mr-[5px] ml-[6px]"><Eye /></button>
              <span>{name}</span>
            </li>
          ))}
        </ul>
        <div className="flex w-[18px] justify-center pt-[20px]"><div className="h-[331px] w-[3px] rounded-full bg-[#868686]" /></div>
      </div>
      <button type="button" className="mt-1 mr-[3px] ml-[9px] flex h-[22px] shrink-0 items-center gap-1 bg-[#fbfbfb] pl-2">
        <svg viewBox="0 0 5 10" className="h-[10px] w-[5px]" aria-hidden="true"><path d="M0 0 5 5 0 10Z" fill="#000" /></svg>
        Layer Display Options
      </button>
      <div className="mt-[2px] flex shrink-0 flex-col border-t border-[#dcdcdc] pt-3 pl-[7px]">
        <span className="leading-5">Presets (Ctrl+Tab):</span>
        <Combo label="Presets" value="All Layers" width="w-full" />
        <span className="mt-1 leading-5">Viewports (Shift+Tab):</span>
        <Combo label="Viewports" value="---" width="w-full" />
      </div>
      <h2 className="mt-[6px] box-content flex h-[26px] shrink-0 items-center border-t-5 border-[#dcdcdc] bg-[#b9b9b9] pl-1 text-[15px] leading-5">Selection Filter</h2>
      <div className="mt-[6px] grid grid-cols-[105px_1fr] pl-[5px]">
        {filters.map(([name, on]) => <FilterBox key={name} name={name} initial={on} />)}
      </div>
    </aside>
  );
}

/* ---------- status ---------- */

const info: [string, string, string][] = [
  ["Text Box", "DESIGN BY - A. P DIMENSION - 34.81mm * 27.1 mm LAYER - 4L", "w-[456px]"],
  ["Layer", "User.1", "w-[78px]"], ["Mirror", "No", "w-[79px]"], ["Angle", "0", "w-[77px]"], ["Font", "Default", "w-[87px]"],
  ["Text Thickness", "0.3000 mm", "w-[132px]"], ["Text Width", "1.5000 mm", "w-[110px]"], ["Text Height", "1.5000 mm", "w-[115px]"],
  ["Box Width", "43.2100 mm", "w-[119px]"], ["Box Height", "9.7600 mm", "w-[112px]"], ["Line Style", "Solid", "w-[101px]"], ["Line Width", "0.2000 mm", "w-[101px]"],
];

const status: [string, string][] = [
  ["File 'D:\\arduino mega 4layer\\arduino board layout.kicad_pcb'", "w-[584px] pl-1"],
  ["Z 4.93", "w-[97px] pl-1"], ["X 73.6700  Y 133.3000", "w-[203px] pl-1"], ["dx 73.6700  dy 133.3000  dist 142.2200", "w-[321px] pl-2"],
  ["grid 0.0100", "w-[234px] pl-3"], ["mm", "w-[77px] pl-1"], ["Select item(s)", "w-[215px] pl-1"],
];

export default function App() {
  return (
    <div className={`flex h-screen flex-col overflow-hidden bg-[#f0f0f0] text-[14px] text-black ${UI}`}>
      <nav className="flex h-5 shrink-0 items-center gap-[18px] bg-white pl-[10px] leading-5">
        {["File", "Edit", "View", "Place", "Route", "Inspect", "Tools", "Preferences", "Help"].map((m) => (
          <button key={m} type="button">{m}</button>
        ))}
      </nav>

      <div className="flex h-[49px] shrink-0 items-center gap-[3px] pl-[6px]">
        <ToolButton label="Save">{ico.save}</ToolButton><VSep />
        <ToolButton label="Board Setup">{ico.board}</ToolButton><VSep />
        <ToolButton label="Page Settings">{ico.page}</ToolButton>
        <ToolButton label="Print">{ico.print}</ToolButton>
        <ToolButton label="Plot">{ico.plot}</ToolButton><VSep />
        <ToolButton label="Undo">{ico.undo}</ToolButton>
        <ToolButton label="Redo">{ico.redo}</ToolButton><VSep />
        <ToolButton label="Find">{ico.find}</ToolButton><VSep />
        <ToolButton label="Refresh">{ico.refresh}</ToolButton>
        <ToolButton label="Zoom In">{ico.zin}</ToolButton>
        <ToolButton label="Zoom Out">{ico.zout}</ToolButton>
        <ToolButton label="Zoom to Fit">{ico.zpage}</ToolButton>
        <ToolButton label="Zoom to Objects">{ico.zobj}</ToolButton>
        <ToolButton label="Zoom to Selection">{ico.zsel}</ToolButton><VSep />
        <ToolButton label="Rotate Counterclockwise">{ico.ccw}</ToolButton>
        <ToolButton label="Rotate Clockwise">{ico.cw}</ToolButton>
        <ToolButton label="Mirror Vertically">{ico.flipv}</ToolButton>
        <ToolButton label="Mirror Horizontally">{ico.fliph}</ToolButton>
        <ToolButton label="Group">{ico.group}</ToolButton>
        <ToolButton label="Ungroup">{ico.ungroup}</ToolButton>
        <ToolButton label="Lock">{ico.lock}</ToolButton>
        <ToolButton label="Unlock">{ico.unlock}</ToolButton><VSep />
        <ToolButton label="Footprint Editor">{ico.fpedit}</ToolButton>
        <ToolButton label="Footprint Library Browser">{ico.lib}</ToolButton>
        <ToolButton label="3D Viewer">{ico.d3}</ToolButton><VSep />
        <ToolButton label="Update PCB from Schematic">{ico.upd}</ToolButton>
        <ToolButton label="Design Rules Checker">{ico.drc}</ToolButton><VSep />
        <ToolButton label="Switch to Schematic Editor">{ico.sch}</ToolButton><VSep />
        <ToolButton label="Scripting Console">{ico.term}</ToolButton>
      </div>

      <div className="flex h-[42px] shrink-0 items-start gap-[3px] pl-[6px]">
        <div className="flex h-[38px] items-center gap-[3px]">
          <Combo label="Track width" value="Track: use netclass width" width="w-[193px]" />
          <ToolButton label="Auto track width" active>
            <path d="M4 1V20Q4 26 10 26H20Q26 26 26 20V1" strokeWidth="2.600" /><path d="M10 11H20M10 15H20" strokeWidth="1.600" /><circle cx="15" cy="26" r="3" fill={B} stroke="none" />
          </ToolButton>
          <VSep />
          <Combo label="Via size" value="Via: use netclass sizes" width="w-[186px]" /><VSep />
          <Combo label="Layer" value="F.Silkscreen" width="w-[159px]" swatch edge />
          <ToolButton label="Layer pair">
            <path d="M0 0H30V30H0Z" fill="#c83434" stroke="none" /><path d="M20 0H30V30H8Z" fill="#ce7d2c" stroke="none" /><path d="M20 0 8 30" stroke="#fff" strokeWidth="2.600" /><path d="M20 0 8 30" stroke="#333" strokeWidth="1.300" />
          </ToolButton>
          <VSep />
          <Combo label="Grid" value="0.0100 mm (0.0004 in)" width="w-[186px]" /><VSep />
          <Combo label="Zoom" value="Zoom 5.00" width="w-[118px]" />
        </div>
      </div>

      <div className="flex min-h-0 flex-1 border-b border-[#9a9a9a]">
        <div className="flex w-11 shrink-0 flex-col items-center gap-[3px] overflow-hidden pt-[5px]">
          <ToolButton label="Show grid" active>{left.grid}</ToolButton>
          <ToolButton label="Grid overrides" active>{left.gridov}</ToolButton>
          <ToolButton label="Polar coordinates">{left.polar}</ToolButton>
          <ToolButton label="Inches"><Dim text="in" /></ToolButton>
          <ToolButton label="Mils"><Dim text="mil" /></ToolButton>
          <ToolButton label="Millimeters" active><Dim text="mm" /></ToolButton>
          <ToolButton label="Full-window crosshairs" active>{left.cursor}</ToolButton><HSep />
          <ToolButton label="Constrain to H, V, 45">{left.angle}</ToolButton><HSep />
          <ToolButton label="Show ratsnest" active>{left.rats}</ToolButton>
          <ToolButton label="Curved ratsnest lines">{left.ratcurve}</ToolButton><HSep />
          <ToolButton label="High contrast">{left.contrast}</ToolButton>
          <ToolButton label="Net highlight">{left.netcol}</ToolButton><HSep />
          <ToolButton label="Filled zones" active>{left.zonefill}</ToolButton>
          <ToolButton label="Zone outlines">{left.zoneout}</ToolButton><HSep />
          <ToolButton label="Sketch pads">{left.padsk}</ToolButton>
          <ToolButton label="Sketch vias">{left.viask}</ToolButton>
          <ToolButton label="Sketch tracks">{left.tracksk}</ToolButton><HSep />
          <ToolButton label="Appearance manager" active>{left.layers}</ToolButton>
        </div>

        <Canvas />

        <div className="flex w-[45px] shrink-0 flex-col items-center gap-[3px] overflow-hidden pt-[5px]">
          <ToolButton label="Select" active>{right.arrow}</ToolButton>
          <ToolButton label="Local ratsnest">{right.local}</ToolButton><HSep />
          <ToolButton label="Add footprint">{right.chip}</ToolButton>
          <ToolButton label="Route tracks" more>{right.route}</ToolButton>
          <ToolButton label="Tune length" more>{right.tune}</ToolButton>
          <ToolButton label="Add via">{right.via}</ToolButton>
          <ToolButton label="Add filled zone">{right.zone}</ToolButton>
          <ToolButton label="Add rule area">{right.rule}</ToolButton><HSep />
          <ToolButton label="Draw line">{right.line}</ToolButton>
          <ToolButton label="Draw arc">{right.arc}</ToolButton>
          <ToolButton label="Draw rectangle">{right.rect}</ToolButton>
          <ToolButton label="Draw circle">{right.circle}</ToolButton>
          <ToolButton label="Draw polygon">{right.poly}</ToolButton>
          <ToolButton label="Draw bezier">{right.bezier}</ToolButton>
          <ToolButton label="Add image">{right.image}</ToolButton>
          <ToolButton label="Add text">{right.text}</ToolButton>
          <ToolButton label="Add text box">{right.textbox}</ToolButton>
          <ToolButton label="Add table">{right.table}</ToolButton>
          <ToolButton label="Add dimension" more>{right.dim}</ToolButton>
        </div>

        <SidePanel />
      </div>

      <dl className="flex h-[41px] shrink-0 overflow-hidden border-b border-[#d5d5d5] pt-px pl-[14px] leading-5 whitespace-nowrap">
        {info.map(([k, v, w]) => (
          <div key={k} className={`shrink-0 ${w}`}>
            <dt>{k}</dt>
            <dd>{v}</dd>
          </div>
        ))}
      </dl>

      <footer className="flex h-3 shrink-0 overflow-hidden leading-5 whitespace-pre">
        {status.map(([t, w]) => (
          <span key={t} className={`h-7 shrink-0 border-r border-[#d5d5d5] pt-1 ${w}`}>{t}</span>
        ))}
      </footer>
    </div>
  );
}
